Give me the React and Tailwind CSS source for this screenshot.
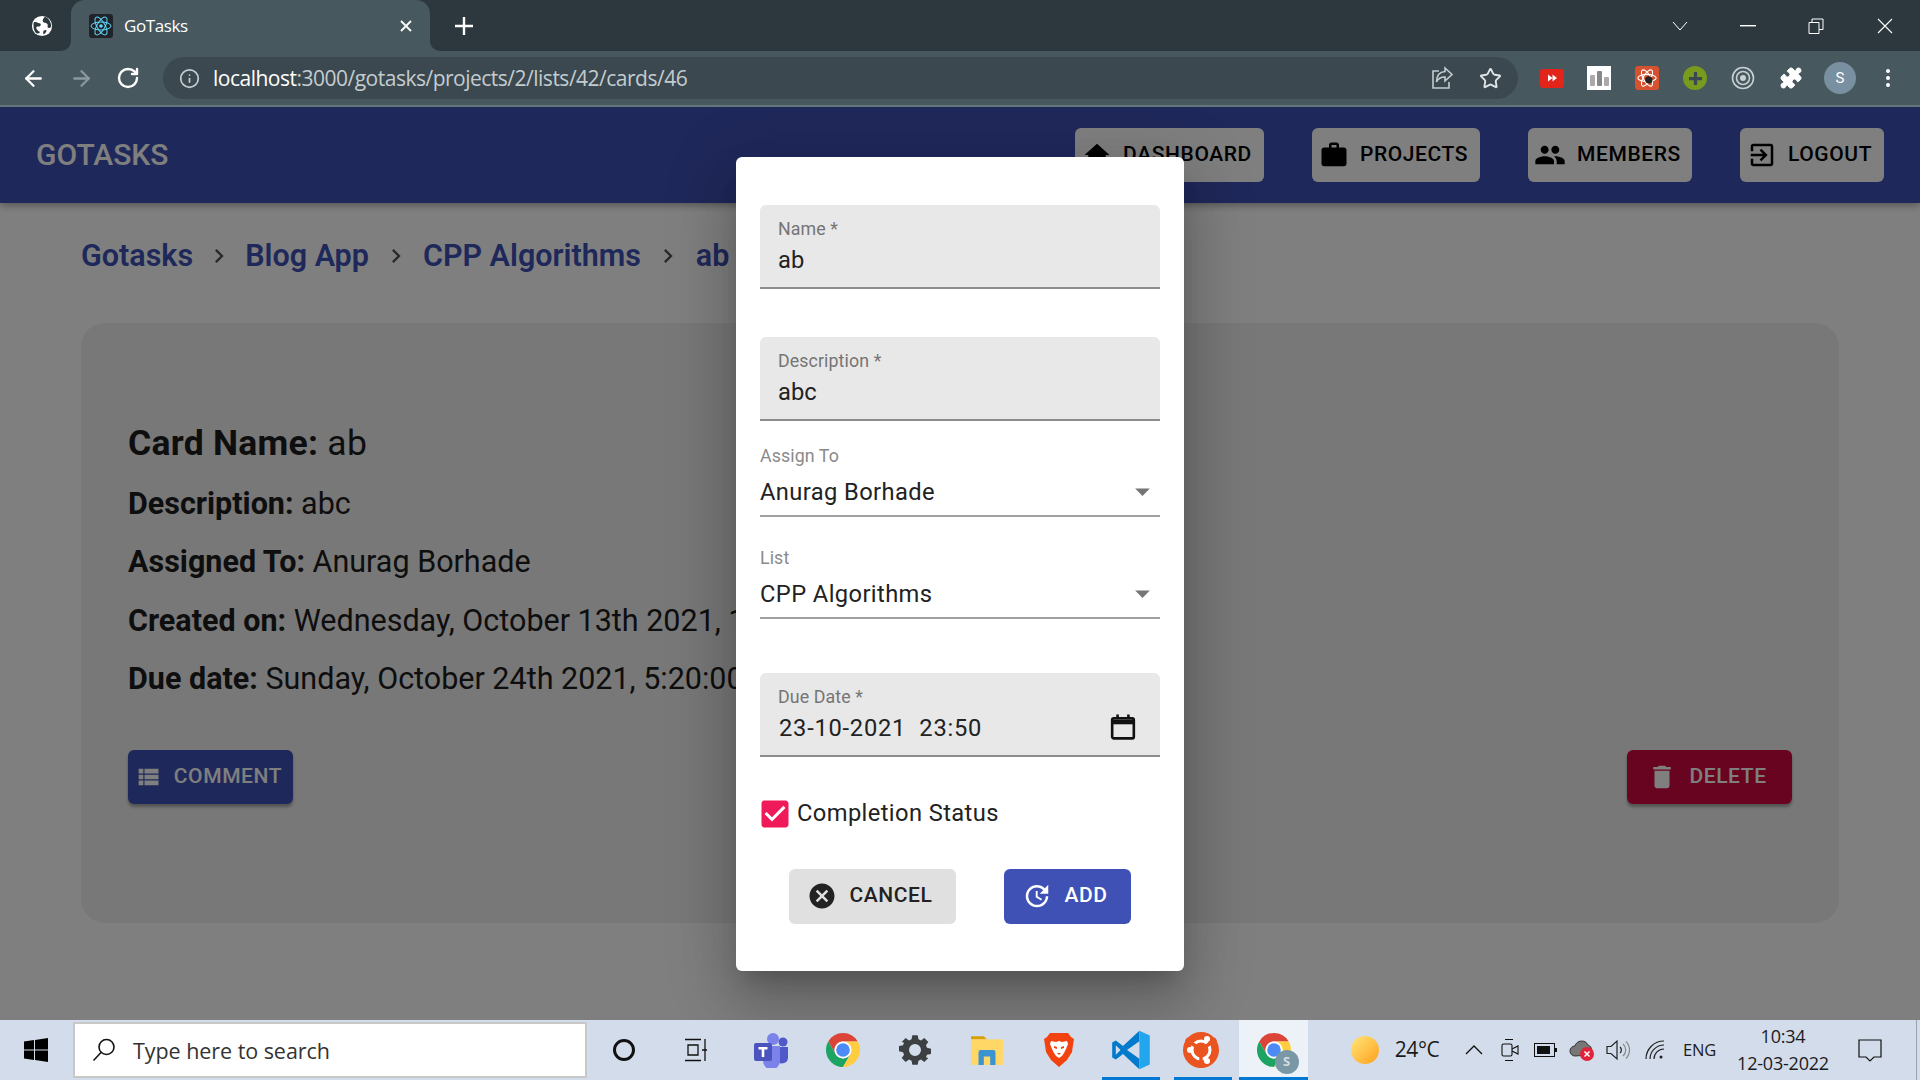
import { ArrowLeft, ArrowRight, Info, Puzzle, RotateCw, Star } from 'lucide-react';

const ICONS = {
  home: 'M10 20v-6h4v6h5v-8h3L12 3 2 12h3v8z',
  work: 'M20 6h-4V4c0-1.11-.89-2-2-2h-4c-1.11 0-2 .89-2 2v2H4c-1.11 0-1.99.89-1.99 2L2 19c0 1.11.89 2 2 2h16c1.11 0 2-.89 2-2V8c0-1.11-.89-2-2-2zm-6 0h-4V4h4v2z',
  people: 'M16 11c1.66 0 2.99-1.34 2.99-3S17.66 5 16 5c-1.66 0-3 1.34-3 3s1.34 3 3 3zm-8 0c1.66 0 2.99-1.34 2.99-3S9.66 5 8 5C6.34 5 5 6.34 5 8s1.34 3 3 3zm0 2c-2.33 0-7 1.17-7 3.5V19h14v-2.5c0-2.33-4.67-3.5-7-3.5zm8 0c-.29 0-.62.02-.97.05 1.16.84 1.97 1.97 1.97 3.45V19h6v-2.5c0-2.33-4.67-3.5-7-3.5z',
  exit: 'M10.09 15.59L11.5 17l5-5-5-5-1.41 1.41L12.67 11H3v2h9.67l-2.58 2.59zM19 3H5c-1.11 0-2 .9-2 2v4h2V5h14v14H5v-4H3v4c0 1.1.89 2 2 2h14c1.1 0 2-.9 2-2V5c0-1.1-.9-2-2-2z',
  list: 'M4 14h4v-4H4v4zm0 5h4v-4H4v4zM4 9h4V5H4v4zm5 5h12v-4H9v4zm0 5h12v-4H9v4zM9 5v4h12V5H9z',
  trash: 'M6 19c0 1.1.9 2 2 2h8c1.1 0 2-.9 2-2V7H6v12zM19 4h-3.5l-1-1h-5l-1 1H5v2h14V4z',
  cancel: 'M12 2C6.47 2 2 6.47 2 12s4.47 10 10 10 10-4.47 10-10S17.53 2 12 2zm5 13.59L15.59 17 12 13.41 8.41 17 7 15.59 10.59 12 7 8.41 8.41 7 12 10.59 15.59 7 17 8.41 13.41 12 17 15.59z',
  update: 'M21 10.12h-6.78l2.74-2.82c-2.73-2.7-7.15-2.8-9.88-.1-2.73 2.71-2.73 7.08 0 9.79s7.15 2.71 9.88 0C18.32 15.65 19 14.08 19 12.1h2c0 1.98-.88 4.55-2.64 6.29-3.51 3.48-9.21 3.48-12.72 0-3.5-3.47-3.53-9.11-.02-12.58s9.14-3.47 12.65 0L21 3v7.12zM12.5 8v4.25l3.5 2.08-.72 1.21L11 13V8h1.5z',
  check: 'M19 3H5c-1.11 0-2 .9-2 2v14c0 1.1.89 2 2 2h14c1.11 0 2-.9 2-2V5c0-1.1-.89-2-2-2zm-9 14l-5-5 1.41-1.41L10 14.17l7.59-7.59L19 8l-9 9z',
  drop: 'M7 10l5 5 5-5z',
  next: 'M10 6L8.59 7.41 13.17 12l-4.58 4.59L10 18l6-6z',
};

function Mi({ name, className }) {
  return (
    <svg viewBox="0 0 24 24" className={className} fill="currentColor">
      <path d={ICONS[name]} />
    </svg>
  );
}

function ReactLogo() {
  return (
    <svg viewBox="0 0 24 24" className="w-[24px] h-[24px] rounded-[3px] bg-[#20232a]" fill="none" stroke="#61dafb" strokeWidth="1">
      <circle cx="12" cy="12" r="1.8" fill="#61dafb" stroke="none" />
      <ellipse cx="12" cy="12" rx="10" ry="4" />
      <ellipse cx="12" cy="12" rx="10" ry="4" transform="rotate(60 12 12)" />
      <ellipse cx="12" cy="12" rx="10" ry="4" transform="rotate(120 12 12)" />
    </svg>
  );
}

function Globe() {
  return (
    <svg viewBox="0 0 24 24" className="w-[22px] h-[22px]">
      <circle cx="12" cy="12" r="11" fill="#fff" />
      <path d="M3 8c3-1 4 1 6 1s2 2 1 3-3 0-4 1 1 4 3 5-1 3-3 2-4-6-3-12zM15 2c-1 2-3 3-2 5s4 1 5 3-1 3 1 4 3-1 3-2c0-4-3-9-7-10zM14 17c1-1 3-1 3 0s-2 4-3 4-1-3 0-4z" fill="#2d383e" />
    </svg>
  );
}

function ChromeLogo({ className }) {
  return (
    <svg viewBox="4 4 40 40" className={className}>
      <path d="M24 4A20 20 0 0 1 41.32 14H24A10 10 0 0 0 15.34 29L6.68 14A20 20 0 0 1 24 4Z" fill="#db4437" />
      <path d="M6.68 14A20 20 0 0 0 24 44L32.66 29A10 10 0 0 1 15.34 29Z" fill="#1da462" />
      <path d="M41.32 14A20 20 0 0 1 24 44L32.66 29A10 10 0 0 0 24 14Z" fill="#ffcd40" />
      <circle cx="24" cy="24" r="10" fill="#fff" />
      <circle cx="24" cy="24" r="8" fill="#4c8bf5" />
    </svg>
  );
}

function BrowserChrome() {
  return (
    <div className="shrink-0">
      <div className="h-[51px] bg-[#2d383e] flex items-end">
        <div className="w-[71px] h-full flex items-center justify-center pl-[13px]"><Globe /></div>
        <div className="relative w-[359px] h-full rounded-t-[14px] bg-[#47585f] flex items-center pl-[18px] pr-[18px] text-white">
          <ReactLogo />
          <span className="ml-[11px] text-[17px] font-['Open_Sans',sans-serif] tracking-[-0.4px]">GoTasks</span>
          <svg viewBox="0 0 12 12" className="ml-auto w-[12px] h-[12px]" stroke="#fff" strokeWidth="1.8"><path d="M1 1l10 10M11 1L1 11" /></svg>
          <svg viewBox="0 0 10 10" className="absolute left-[-10px] bottom-0 w-[10px] h-[10px]"><path d="M10 0v10H0a10 10 0 0 0 10-10z" fill="#47585f" /></svg>
          <svg viewBox="0 0 10 10" className="absolute right-[-10px] bottom-0 w-[10px] h-[10px]"><path d="M0 0v10h10A10 10 0 0 1 0 0z" fill="#47585f" /></svg>
        </div>
        <div className="h-full w-[36px] ml-[16px] flex items-center justify-center">
          <svg viewBox="0 0 18 18" className="w-[18px] h-[18px]" stroke="#fff" strokeWidth="2.4"><path d="M9 0v18M0 9h18" /></svg>
        </div>
        <div className="ml-auto h-full flex items-center text-white">
          <svg viewBox="0 0 16 10" className="w-[16px] h-[10px] mr-[52px]" fill="none" stroke="#fff"><path d="M1 1l7 8 7-8" /></svg>
          <svg viewBox="0 0 16 2" className="w-[16px] h-[2px] mr-[52px]"><rect width="16" height="1.4" fill="#fff" /></svg>
          <svg viewBox="0 0 16 16" className="w-[16px] h-[16px] mr-[53px]" fill="none" stroke="#fff"><path d="M1 4.5h10v11H1zM4 4.5V1h11v10.5h-4" /></svg>
          <svg viewBox="0 0 16 16" className="w-[16px] h-[16px] mr-[27px]" fill="none" stroke="#fff" strokeWidth="1.1"><path d="M1 1l14 14M15 1L1 15" /></svg>
        </div>
      </div>
      <div className="h-[56px] bg-[#47585f] border-b-2 border-[#64757c] flex items-center text-white">
        <ArrowLeft className="ml-[21px] w-[25px] h-[25px]" strokeWidth={2.2} />
        <ArrowRight className="ml-[23px] w-[25px] h-[25px] text-[#8b999f]" strokeWidth={2.2} />
        <RotateCw className="ml-[22px] w-[24px] h-[24px]" strokeWidth={2.4} />
        <div className="ml-[23px] w-[1355px] h-[42px] rounded-full bg-[#3b484f] flex items-center pl-[16px] pr-[16px]">
          <Info className="w-[21px] h-[21px] text-[#c4cccf]" strokeWidth={2} />
          <span className="ml-[13px] pt-[2px] text-[21px] font-['Open_Sans',sans-serif] tracking-[-0.5px] text-[#c4cccf]">
            <span className="text-white">localhost</span>:3000/gotasks/projects/2/lists/42/cards/46
          </span>
          <svg viewBox="0 0 24 24" className="ml-auto w-[24px] h-[24px]" fill="none" stroke="#c4cccf" strokeWidth="1.6">
            <path d="M9 5H3v17h16v-6" />
            <path d="M15 2l7 6.500-7 6.500v-4c-4 0-7 1.500-8.500 5 0-6 3-10 8.500-10.500z" />
          </svg>
          <Star className="ml-[25px] w-[23px] h-[23px] text-[#dfe4e6]" strokeWidth={2} />
        </div>
        <div className="ml-[22px] w-[24px] h-[19px] rounded-[3px] bg-[#e3241b] flex items-center justify-center">
          <svg viewBox="0 0 10 8" className="w-[9px] h-[8px]" fill="#fff"><path d="M0 0l5 4-5 4zM5 0l5 4-5 4z" /></svg>
        </div>
        <div className="ml-[23px] w-[24px] h-[24px] bg-white flex items-end justify-center gap-[2px] pb-[4px]">
          <i className="w-[5px] h-[11px] bg-[#aaa] rounded-[1px]" />
          <i className="w-[5px] h-[15px] bg-[#888] rounded-[1px]" />
          <i className="w-[5px] h-[9px] bg-[#aaa] rounded-[1px]" />
        </div>
        <div className="ml-[24px] w-[24px] h-[24px] rounded-[3px] bg-[#d5512f] flex items-center justify-center">
          <svg viewBox="0 0 24 24" className="w-[22px] h-[22px]" fill="none" stroke="#fff" strokeWidth="1.2">
            <ellipse cx="12" cy="12" rx="10" ry="4" />
            <ellipse cx="12" cy="12" rx="10" ry="4" transform="rotate(60 12 12)" />
            <ellipse cx="12" cy="12" rx="10" ry="4" transform="rotate(120 12 12)" />
            <circle cx="14" cy="14" r="4" fill="#222" stroke="none" />
          </svg>
        </div>
        <div className="ml-[24px] w-[24px] h-[24px] rounded-full bg-[#789a1f] flex items-center justify-center">
          <svg viewBox="0 0 12 12" className="w-[13px] h-[13px]" stroke="#3b484f" strokeWidth="3"><path d="M6 0v12M0 6h12" /></svg>
        </div>
        <svg viewBox="0 0 24 24" className="ml-[24px] w-[24px] h-[24px]" fill="none" stroke="#c8d0d3">
          <circle cx="12" cy="12" r="10.5" strokeWidth="1.6" />
          <circle cx="12" cy="12" r="6.5" strokeWidth="1.6" />
          <circle cx="12" cy="12" r="3" fill="#c8d0d3" stroke="none" />
        </svg>
        <Puzzle className="ml-[24px] w-[24px] h-[24px]" fill="#fff" strokeWidth={1} />
        <div className="ml-[21px] w-[32px] h-[32px] rounded-full bg-[#78909f] flex items-center justify-center text-[15px] text-white font-['Roboto',sans-serif]">S</div>
        <svg viewBox="0 0 4 18" className="ml-[30px] w-[4px] h-[18px]" fill="#fff">
          <circle cx="2" cy="2" r="2" /><circle cx="2" cy="9" r="2" /><circle cx="2" cy="16" r="2" />
        </svg>
      </div>
    </div>
  );
}

function NavButton({ icon, label, width, iconSize }) {
  return (
    <button className={`${width} h-[54px] pr-[5px] rounded-[6px] bg-white text-black flex items-center justify-center gap-[11px] text-[21px] font-medium tracking-[0.6px]`}>
      <Mi name={icon} className={iconSize} />
      {label}
    </button>
  );
}

function Page() {
  return (
    <div className="h-full bg-white font-['Roboto',sans-serif] text-[#1c1c1c]">
      <header className="h-[96px] bg-[#3f51b5] flex items-center pl-[36px] pr-[36px] gap-[48px] shadow-[0_3px_7px_rgba(0,0,0,0.3)]">
        <span className="mr-auto mb-[2px] text-[30px] font-medium text-white">GOTASKS</span>
        <NavButton icon="home" label="DASHBOARD" width="w-[189px]" iconSize="w-[30px] h-[30px]" />
        <NavButton icon="work" label="PROJECTS" width="w-[168px]" iconSize="w-[30px] h-[30px]" />
        <NavButton icon="people" label="MEMBERS" width="w-[164px]" iconSize="w-[32px] h-[32px]" />
        <NavButton icon="exit" label="LOGOUT" width="w-[144px]" iconSize="w-[30px] h-[30px]" />
      </header>
      <nav className="h-[120px] pl-[81px] flex items-center pb-[14px] text-[30.5px] font-semibold text-[#3f51b5]">
        <span>Gotasks</span>
        <Mi name="next" className="w-[28px] h-[28px] mx-[12px] text-[#555]" />
        <span>Blog App</span>
        <Mi name="next" className="w-[28px] h-[28px] mx-[13px] text-[#555]" />
        <span>CPP Algorithms</span>
        <Mi name="next" className="w-[28px] h-[28px] mx-[13.5px] text-[#555]" />
        <span>ab</span>
      </nav>
      <section className="ml-[81px] w-[1758px] h-[600px] rounded-[24px] bg-[#f0f0f0] px-[47px] pt-[95px]">
        <p className="h-[50px] text-[35.5px] tracking-[0.26px] leading-[50px]"><b className="font-bold">Card Name:</b> ab</p>
        <p className="mt-[11px] h-[58px] text-[30.5px] leading-[50px]"><b className="font-bold">Description:</b> abc</p>
        <p className="h-[59px] text-[30.5px] leading-[50px]"><b className="font-bold">Assigned To:</b> Anurag Borhade</p>
        <p className="h-[58px] text-[30.5px] leading-[50px] whitespace-nowrap"><b className="font-bold">Created on:</b> Wednesday, October 13th 2021, 1:20:00 pm</p>
        <p className="h-[58px] text-[30.5px] leading-[50px] whitespace-nowrap"><b className="font-bold">Due date:</b> Sunday, October 24th 2021, 5:20:00 pm</p>
        <div className="mt-[38px] flex justify-between">
          <button className="w-[165px] h-[54px] pr-[5px] rounded-[6px] bg-[#3f51b5] text-white flex items-center justify-center gap-[12px] text-[21px] font-medium tracking-[0.6px] shadow-[0_3px_3px_rgba(0,0,0,0.3)]">
            <Mi name="list" className="w-[28px] h-[28px]" />COMMENT
          </button>
          <button className="w-[165px] h-[54px] pr-[5px] rounded-[6px] bg-[#d0083e] text-white flex items-center justify-center gap-[12px] text-[21px] font-medium tracking-[0.6px] shadow-[0_3px_3px_rgba(0,0,0,0.3)]">
            <Mi name="trash" className="w-[30px] h-[30px]" />DELETE
          </button>
        </div>
      </section>
    </div>
  );
}

function FilledField({ label, value }) {
  return (
    <div className="h-[84px] rounded-t-[6px] bg-[#e8e8e8] border-b-2 border-[#8c8c8c] px-[18px] pt-[12px]">
      <div className="text-[17.8px] leading-[24px] text-[#757575] tracking-[0.1px]">{label}</div>
      <div className="mt-[2px] text-[23.7px] leading-[34px] text-[#222]">{value}</div>
    </div>
  );
}

function SelectField({ label, value, className }) {
  return (
    <div className={`h-[73px] border-b-2 border-[#a0a0a0] relative ${className}`}>
      <div className="text-[17.8px] leading-[24px] text-[#8a8a8a] tracking-[0.1px]">{label}</div>
      <div className="mt-[7px] text-[23.7px] leading-[34px] tracking-[0.4px] text-[#222]">{value}</div>
      <Mi name="drop" className="absolute right-0 bottom-[6px] w-[35px] h-[35px] text-[#757575]" />
    </div>
  );
}

function Modal() {
  return (
    <div className="w-[448px] h-[814px] rounded-[6px] bg-white px-[24px] pt-[48px] font-['Roboto',sans-serif] shadow-[0_16px_22px_-10px_rgba(0,0,0,0.2),0_36px_56px_4px_rgba(0,0,0,0.14),0_13px_68px_12px_rgba(0,0,0,0.12)]">
      <FilledField label="Name *" value="ab" />
      <div className="h-[48px]" />
      <FilledField label="Description *" value="abc" />
      <SelectField label="Assign To" value="Anurag Borhade" className="mt-[23px]" />
      <SelectField label="List" value="CPP Algorithms" className="mt-[29px]" />
      <div className="mt-[54px] h-[84px] rounded-t-[6px] bg-[#e8e8e8] border-b-2 border-[#8c8c8c] px-[18px] pt-[12px] relative">
        <div className="text-[17.8px] leading-[24px] text-[#757575] tracking-[0.1px]">Due Date *</div>
        <div className="mt-[2px] ml-[1px] text-[23.7px] leading-[34px] tracking-[0.75px] text-[#222] whitespace-pre">23-10-2021  23:50</div>
        <svg viewBox="0 0 24 24" className="absolute right-[24px] bottom-[14px] w-[26px] h-[28px]" fill="none" stroke="#111" strokeWidth="2.4">
          <rect x="2" y="4" width="20" height="18.5" rx="1.5" />
          <path d="M2 7.5h20" strokeWidth="4" />
          <path d="M7 0.5v4M17 0.5v4" />
        </svg>
      </div>
      <div className="mt-[41px] h-[32px] flex items-center text-[23.7px] tracking-[0.4px] text-[#222]">
        <Mi name="check" className="w-[36px] h-[36px] ml-[-3px] text-[#f01a5a] shrink-0" />
        <span className="ml-[4px]">Completion Status</span>
      </div>
      <div className="mt-[39px] flex justify-center gap-[48px]">
        <button className="w-[167px] h-[55px] pr-[5px] rounded-[6px] bg-[#e0e0e0] text-[#222] flex items-center justify-center gap-[12px] text-[21px] font-medium tracking-[0.6px]">
          <Mi name="cancel" className="w-[30px] h-[30px]" />CANCEL
        </button>
        <button className="w-[127px] h-[55px] pr-[5px] rounded-[6px] bg-[#3f51b5] text-white flex items-center justify-center gap-[12px] text-[21px] font-medium tracking-[0.6px]">
          <Mi name="update" className="w-[30px] h-[30px]" />ADD
        </button>
      </div>
    </div>
  );
}

function Cell({ children, active, underline, width = 'w-[72px]' }) {
  return (
    <div className={`${width} h-full relative flex items-center justify-center ${active ? 'bg-[#edf1f8]' : ''}`}>
      {children}
      {underline && <div className={`absolute bottom-0 h-[3px] bg-[#0078d4] ${active ? 'inset-x-0' : 'inset-x-[7px]'}`} />}
    </div>
  );
}

function Taskbar() {
  return (
    <div className="h-[60px] shrink-0 bg-[#d3dcea] flex text-[#1b1b1b] font-['Open_Sans',sans-serif]">
      <div className="w-[73px] h-full flex items-center pl-[24px]">
        <svg viewBox="0 0 24 24" className="w-[24px] h-[24px]" fill="#000">
          <path d="M0 3.5l10-1.4v9.4H0zM11 2l13-2v11.5H11zM0 12.5h10V22L0 20.6zM11 12.5h13V24l-13-2z" />
        </svg>
      </div>
      <div className="w-[514px] h-[56px] mt-[2px] bg-white border-2 border-[#c8c8c8] flex items-center pl-[17px]">
        <svg viewBox="0 0 24 24" className="w-[24px] h-[24px]" fill="none" stroke="#111" strokeWidth="1.6">
          <circle cx="14.5" cy="9" r="7.5" /><path d="M9 14.5L1.5 22.5" />
        </svg>
        <span className="ml-[17px] pt-[3px] text-[21.5px] tracking-[-0.05px] text-[#333]">Type here to search</span>
      </div>
      <div className="w-[1px]" />
      <Cell>
        <div className="w-[22px] h-[22px] rounded-full border-[3.5px] border-[#111]" />
      </Cell>
      <Cell>
        <svg viewBox="0 0 24 24" className="w-[26px] h-[24px]" fill="none" stroke="#111" strokeWidth="1.3">
          <path d="M1 1.5h16M1 22.5h16M4 7h10v10H4zM21 1v22M18 12h5" />
        </svg>
      </Cell>
      <div className="w-[3px]" />
      <Cell>
        <svg viewBox="0 0 36 36" className="w-[36px] h-[36px]">
          <circle cx="20" cy="7" r="6" fill="#7b83eb" />
          <circle cx="30" cy="10" r="4.5" fill="#5059c9" />
          <path d="M25 15h10v11a6 6 0 0 1-10 4z" fill="#5059c9" />
          <path d="M10 14h17v15a8.5 8.5 0 0 1-17 0z" fill="#7b83eb" />
          <rect x="1" y="11" width="18" height="18" rx="2" fill="#4b53bc" />
          <path d="M5.5 15h9v2.5h-3.2V25H8.700v-7.500H5.500z" fill="#fff" />
        </svg>
      </Cell>
      <Cell><ChromeLogo className="w-[34px] h-[34px]" /></Cell>
      <Cell>
        <svg viewBox="0 0 24 24" className="w-[32px] h-[32px]" fill="#3d4043">
          <path fillRule="evenodd" d="M10 1h4l.6 3 1.9.8L19 3l3 3-1.800 2.500.8 1.900 3 .6v4l-3 .6-.8 1.900L22 18l-3 3-2.500-1.800-1.900.8-.6 3h-4l-.6-3-1.900-.8L5 21l-3-3 1.800-2.500-.8-1.900-3-.6v-4l3-.6.8-1.900L2 6l3-3 2.500 1.800 1.900-.8zM12 7.500a4.500 4.500 0 1 0 0 9 4.500 4.500 0 0 0 0-9z" />
        </svg>
      </Cell>
      <Cell>
        <svg viewBox="0 0 32 32" className="w-[34px] h-[34px]">
          <path d="M1 3h12l3 3H1z" fill="#d9a000" />
          <path d="M1 6h30v24H1z" fill="#ffd766" />
          <path d="M8 30V18a2 2 0 0 1 2-2h12a2 2 0 0 1 2 2v12h-5v-8h-6v8z" fill="#3b93d1" />
        </svg>
      </Cell>
      <Cell>
        <svg viewBox="0 0 32 36" className="w-[32px] h-[36px]">
          <path d="M7 1h18l3 4 3 2-1 6-1 7-5 8-8 7-8-7-5-8-1-7-1-6 3-2z" fill="#f1420f" />
          <path d="M8 9l5 1 3-1 3 1 5-1 1 3-2 5-2 4-2 3-3 2-3-2-2-3-2-4-2-5z" fill="#fff" />
          <path d="M11 14l3 1v2l-3-1zM21 14l-3 1v2l3-1zM14 21h4l-2 2z" fill="#f1420f" />
        </svg>
      </Cell>
      <Cell underline>
        <svg viewBox="0 0 100 100" className="w-[40px] h-[40px]">
          <path fillRule="evenodd" d="M71 2L30 40 12 26 3 31v38l9 5 18-14 41 38zM71 28L40 50l31 22zM12 38v24l12-12z" fill="#007acc" />
          <path d="M71 2l26 12v72L71 98z" fill="#24a6ef" />
        </svg>
      </Cell>
      <Cell underline>
        <svg viewBox="0 0 36 36" className="w-[36px] h-[36px] mr-[4px]">
          <circle cx="18" cy="18" r="18" fill="#e95420" />
          <circle cx="18" cy="18" r="9" fill="none" stroke="#fff" strokeWidth="3" />
          <path d="M18 18L3 7M18 18L33 7M18 18v18" stroke="#e95420" strokeWidth="3.500" />
          <circle cx="7" cy="18" r="3" fill="#fff" />
          <circle cx="24" cy="7" r="3" fill="#fff" />
          <circle cx="24" cy="29" r="3" fill="#fff" />
        </svg>
      </Cell>
      <Cell active underline width="w-[69px]">
        <div className="relative w-[34px] h-[34px]">
          <ChromeLogo className="w-[34px] h-[34px]" />
          <div className="absolute right-[-8px] bottom-[-7px] w-[24px] h-[24px] rounded-full bg-[#7a97a6] flex items-center justify-center text-[13px] font-bold text-[#d5dde1]">S</div>
        </div>
      </Cell>
      <Tray />
    </div>
  );
}

function Tray() {
  return (
    <div className="ml-auto w-[580px] h-full flex items-center shrink-0">
      <div className="w-[50px] flex justify-center">
        <div className="w-[28px] h-[28px] rounded-full bg-gradient-to-br from-[#ffe773] to-[#ff9f0a]" />
      </div>
      <div className="w-[66px] pr-[12px] text-center text-[21px] tracking-[-0.4px] whitespace-nowrap">24°C</div>
      <div className="w-[36px] flex justify-center">
        <svg viewBox="0 0 18 10" className="w-[18px] h-[10px]" fill="none" stroke="#111" strokeWidth="1.3"><path d="M1 9l8-8 8 8" /></svg>
      </div>
      <div className="w-[36px] flex justify-center">
        <svg viewBox="0 0 20 24" className="w-[20px] h-[24px]" fill="none" stroke="#111" strokeWidth="1.1">
          <rect x="2" y="6" width="10" height="12" rx="1.5" />
          <path d="M12 11l6-3v8l-6-3M5 1.500h8M5 22.500h8" />
        </svg>
      </div>
      <div className="w-[36px] flex justify-center">
        <svg viewBox="0 0 24 14" className="w-[24px] h-[14px]">
          <rect x="0.500" y="0.500" width="20" height="13" fill="none" stroke="#111" />
          <rect x="3" y="3" width="13" height="8" fill="#111" />
          <rect x="21" y="5" width="2" height="4" fill="#111" />
        </svg>
      </div>
      <div className="w-[36px] flex justify-center">
        <svg viewBox="0 0 26 24" className="w-[26px] h-[24px]">
          <path d="M6 18a5 5 0 0 1 0-10 7 7 0 0 1 13-1 5.500 5.500 0 0 1 1 10z" fill="#777" stroke="#333" />
          <circle cx="18" cy="16" r="7" fill="#e0243b" />
          <path d="M15.500 13.500l5 5M20.500 13.500l-5 5" stroke="#fff" strokeWidth="1.500" />
        </svg>
      </div>
      <div className="w-[36px] flex justify-center">
        <svg viewBox="0 0 24 22" className="w-[24px] h-[22px]" fill="none" stroke="#222" strokeWidth="1.2">
          <path d="M1 7.500h4l6-5.500v18l-6-5.500H1z" />
          <path d="M14 8a4 4 0 0 1 0 6" />
          <path d="M17 5a8 8 0 0 1 0 12M20 2.500a12 12 0 0 1 0 17" stroke="#888" />
        </svg>
      </div>
      <div className="w-[37px] flex justify-center">
        <svg viewBox="0 0 20 20" className="w-[20px] h-[20px]" fill="none" stroke="#222" strokeWidth="1.2">
          <path d="M1 19A18 18 0 0 1 19 1M5 19A14 14 0 0 1 19 5M9 19A10 10 0 0 1 19 9" />
          <circle cx="16" cy="17" r="1.500" fill="#222" stroke="none" />
        </svg>
      </div>
      <div className="w-[53px] text-center text-[16.5px] tracking-[-0.2px]">ENG</div>
      <div className="ml-[20px] w-[74px] flex flex-col items-center text-[18px] leading-[27px] tracking-[-0.2px] whitespace-nowrap">
        <span>10:34</span>
        <span>12-03-2022</span>
      </div>
      <div className="ml-[38px] w-[24px] flex justify-center">
        <svg viewBox="0 0 24 24" className="w-[24px] h-[24px]" fill="none" stroke="#111" strokeWidth="1.200"><path d="M1 2h22v17H16l-4 4-4-4H1z" /></svg>
      </div>
      <div className="ml-[34px] h-full w-px bg-[#9aa2ad]" />
    </div>
  );
}

export default function App() {
  return (
    <div className="w-[1920px] h-[1080px] flex flex-col overflow-hidden">
      <BrowserChrome />
      <main className="relative flex-1 min-h-0 overflow-hidden">
        <Page />
        <div className="absolute inset-0 bg-black/50 flex items-center justify-center">
          <Modal />
        </div>
      </main>
      <Taskbar />
    </div>
  );
}
